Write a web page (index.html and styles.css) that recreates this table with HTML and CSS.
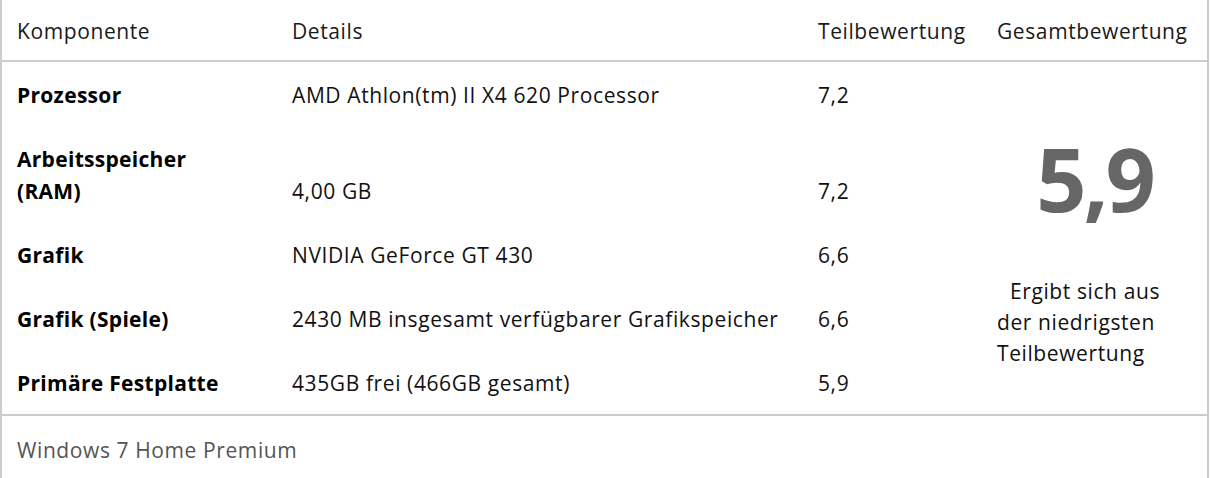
FILE: index.html
```html
<!DOCTYPE html>
<html lang="de">
  <head>
    <meta charset="UTF-8" />
    <meta name="viewport" content="width=device-width, initial-scale=1.0" />
    <title>Leistungsindex</title>
    <link rel="stylesheet" href="styles.css">
  </head>
  <body>
    <div class="panel">
      <table class="bewertung">
        <colgroup>
          <col class="col-komponente" />
          <col class="col-details" />
          <col class="col-teil" />
          <col class="col-gesamt" />
        </colgroup>
        <thead>
          <tr>
            <th>Komponente</th>
            <th>Details</th>
            <th>Teilbewertung</th>
            <th>Gesamtbewertung</th>
          </tr>
        </thead>
        <tbody>
          <tr>
            <td class="name">Prozessor</td>
            <td>AMD Athlon(tm) II X4 620 Processor</td>
            <td>7,2</td>
            <td rowspan="5" class="gesamt">
              <div class="zahl">5,9</div>
              <p class="hinweis">Ergibt sich aus der niedrigsten Teilbewertung</p>
            </td>
          </tr>
          <tr>
            <td class="name">Arbeitsspeicher<br />(RAM)</td>
            <td>4,00 GB</td>
            <td>7,2</td>
          </tr>
          <tr>
            <td class="name">Grafik</td>
            <td>NVIDIA GeForce GT 430</td>
            <td>6,6</td>
          </tr>
          <tr>
            <td class="name">Grafik (Spiele)</td>
            <td>2430 MB insgesamt verfügbarer Grafikspeicher</td>
            <td>6,6</td>
          </tr>
          <tr>
            <td class="name">Primäre Festplatte</td>
            <td>435GB frei (466GB gesamt)</td>
            <td>5,9</td>
          </tr>
        </tbody>
      </table>
      <div class="edition">Windows 7 Home Premium</div>
    </div>
  </body>
</html>
```

FILE: styles.css
```css
* {
  box-sizing: border-box;
}
body {
  margin: 0;
  background-color: white;
  font-family: "Open Sans", "Noto Sans", sans-serif;
  font-size: 21px;
  letter-spacing: 0.6px;
  color: #111;
}
.panel {
  width: 1209px;
  height: 478px;
  border-left: solid 2px #cccccc;
  border-right: solid 2px #cccccc;
}
.bewertung {
  width: 100%;
  table-layout: fixed;
  border-collapse: collapse;
  border-bottom: solid 2px #cccccc;
}
.col-komponente {
  width: 275px;
}
.col-details {
  width: 526px;
}
.col-teil {
  width: 179px;
}
th {
  text-align: left;
  font-weight: normal;
  line-height: 30px;
  padding: 16px 15px 14px 15px;
  height: 60px;
  color: #1a1a1a;
  white-space: nowrap;
  border-bottom: solid 2px #cccccc;
}
td {
  vertical-align: bottom;
  line-height: 32px;
  padding: 17px 15px 15px 15px;
  white-space: nowrap;
}
.name {
  font-weight: bold;
  letter-spacing: 0.3px;
  color: #000;
}
td.gesamt {
  vertical-align: top;
  padding: 0 15px;
  white-space: normal;
}
.zahl {
  font-size: 88px;
  font-weight: bold;
  letter-spacing: -3px;
  color: #666666;
  text-align: center;
  line-height: 100px;
  margin-top: 66px;
}
.hinweis {
  margin: 48px 0 0 0;
  line-height: 31px;
  text-indent: 13px;
  width: 175px;
}
.edition {
  padding: 18px 15px 14px 15px;
  line-height: 32px;
  color: #555555;
}
```
